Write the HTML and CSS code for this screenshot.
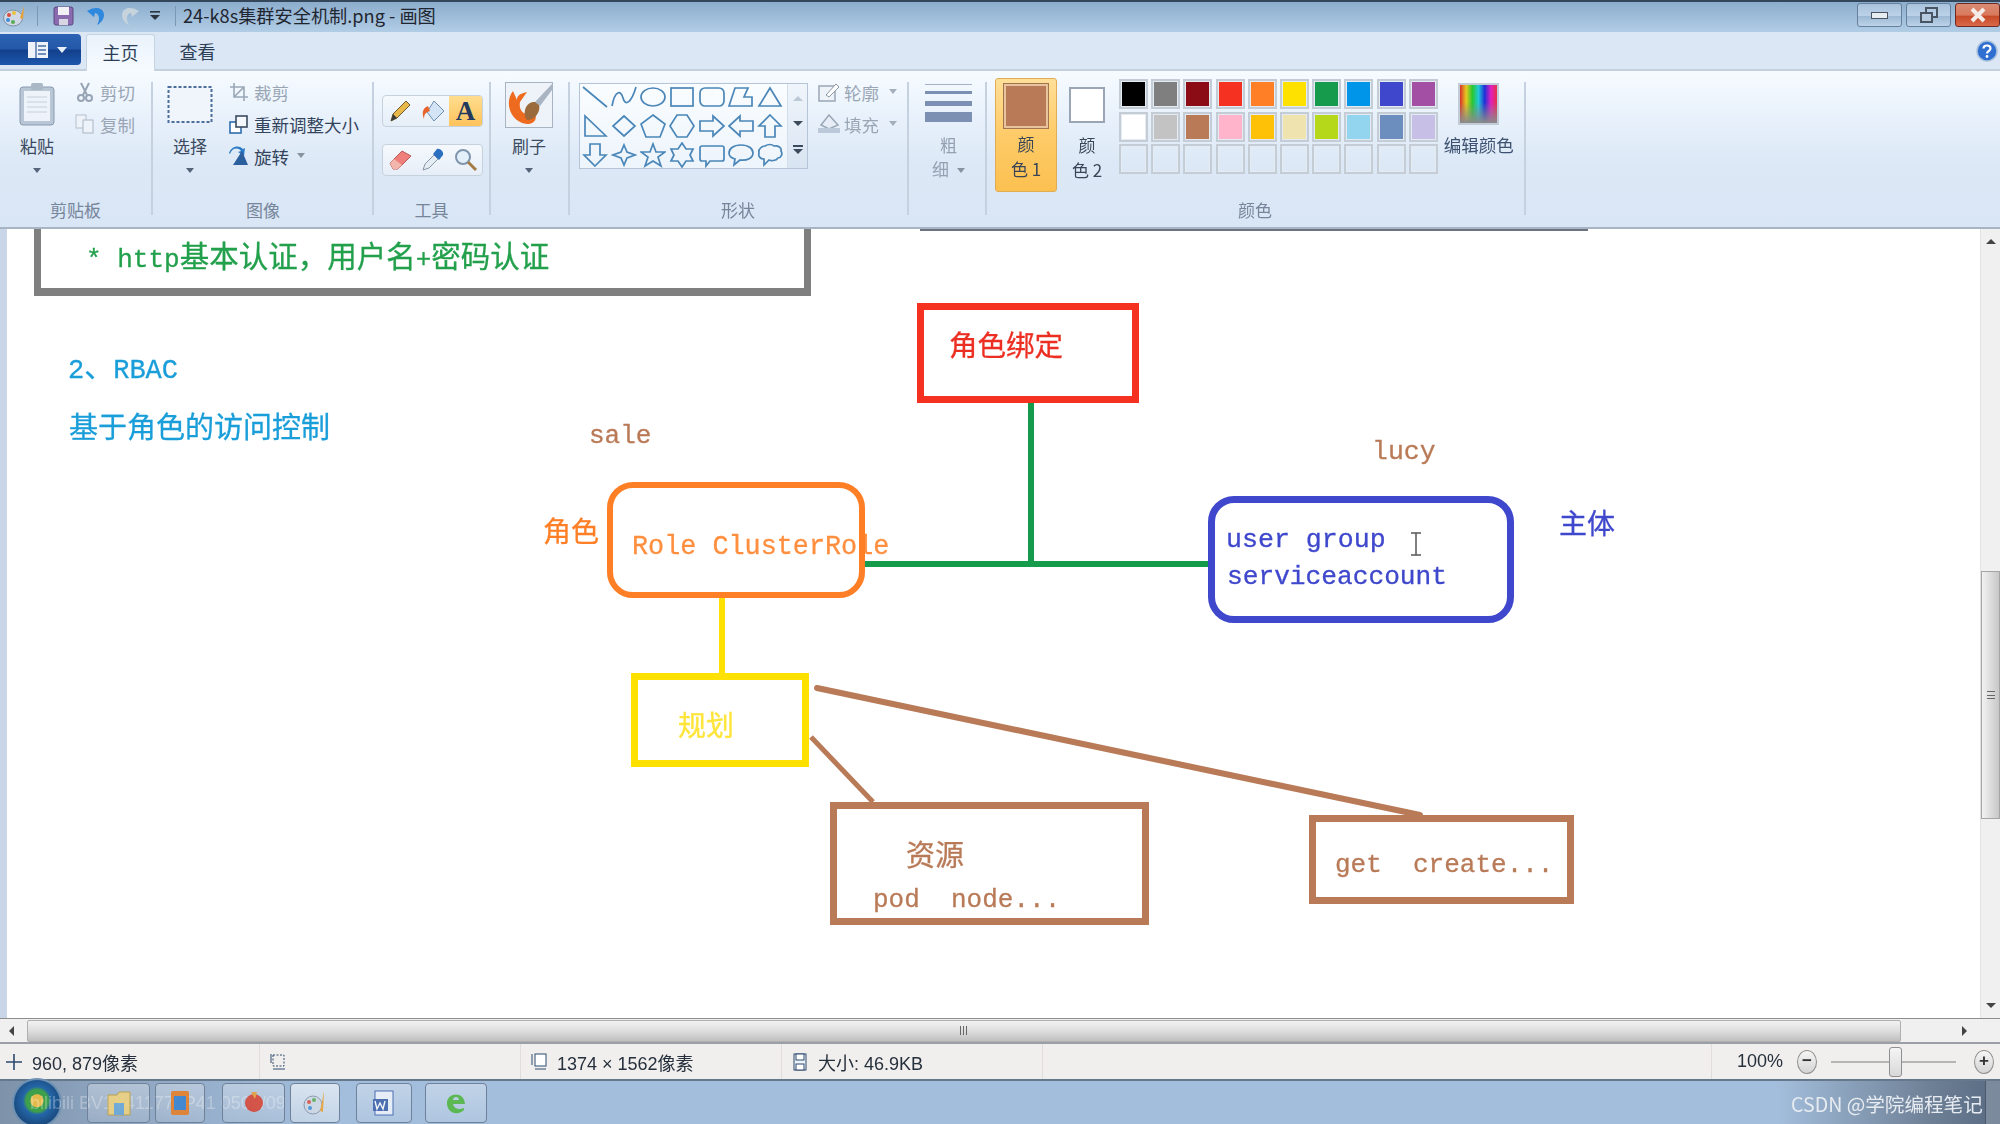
FILE: index.html
```html
<!DOCTYPE html>
<html lang="zh">
<head>
<meta charset="utf-8">
<title>24-k8s集群安全机制.png - 画图</title>
<link rel="stylesheet" href="styles.css">
</head>
<body>
<div class="app">
  <header class="titlebar">
    <svg class="qa qa-app" viewBox="0 0 24 22"><ellipse cx="10" cy="13" rx="9.5" ry="8" fill="#cfd8e4" stroke="#7f8fa3"/><circle cx="6" cy="10" r="2" fill="#d9503f"/><circle cx="11" cy="8" r="2" fill="#e8c33d"/><circle cx="5" cy="15" r="2" fill="#3d8ed9"/><circle cx="10" cy="17" r="2" fill="#58ad53"/><path d="M21 1 L17 13 L20 14 Z" fill="#e8a033"/></svg>
    <span class="qa-sep"></span>
    <svg class="qa qa-save" viewBox="0 0 21 20"><rect x="1" y="1" width="19" height="18" rx="2" fill="#8a6bb0" stroke="#5c4880"/><rect x="5" y="1" width="11" height="8" fill="#f2f2f6"/><rect x="6" y="13" width="9" height="6" fill="#d9d6e4"/></svg>
    <svg class="qa qa-undo" viewBox="0 0 21 20"><path d="M2 5 C8 0 18 1 18 9 C18 13 15 17 11 19 C14 14 14 8 9 7 L8 11 L1 5 L9 1 Z" fill="#2d88de"/></svg>
    <svg class="qa qa-redo" viewBox="0 0 21 20"><path d="M19 5 C13 0 3 1 3 9 C3 13 6 17 10 19 C7 14 7 8 12 7 L13 11 L20 5 L12 1 Z" fill="#c6d2dc"/></svg>
    <svg class="qa qa-more" viewBox="0 0 12 12"><rect x="1" y="1" width="10" height="1.6" fill="#2c3440"/><path d="M1 5 H11 L6 10 Z" fill="#2c3440"/></svg>
    <span class="qa-sep qa-sep2"></span>
    <span class="title-text">24-k8s集群安全机制.png - 画图</span>
    <div class="win-btns">
      <span class="win-btn"><span class="win-min"></span></span>
      <span class="win-btn"><svg class="win-ic" viewBox="0 0 18 16"><rect x="6" y="1" width="11" height="9" fill="none" stroke="#4a5563" stroke-width="2"/><rect x="1" y="6" width="11" height="9" fill="#b6cbe0" stroke="#4a5563" stroke-width="2"/></svg></span>
      <span class="win-btn win-close"><svg class="win-ic" viewBox="0 0 18 16"><path d="M3 2 L15 14 M15 2 L3 14" stroke="#f4ece8" stroke-width="4"/></svg></span>
    </div>
  </header>

  <nav class="tabs">
    <span class="file-btn"><svg class="file-ic" viewBox="0 0 22 18"><rect x="1" y="1" width="20" height="16" fill="#eef3fa"/><path d="M9 1 V17 M11 5 H19 M11 9 H19 M11 13 H19" stroke="#4a6ea5" stroke-width="1.4"/></svg><i class="arrow-w"></i></span>
    <span class="tab tab-on">主页</span>
    <span class="tab">查看</span>
    <svg class="help" viewBox="0 0 22 22"><circle cx="11" cy="11" r="10" fill="#2f6fd0" stroke="#a8c0dc" stroke-width="1.5"/><path d="M7.5 8.5 C7.5 4.5 14.5 4.5 14.5 8.5 C14.5 11 11 11 11 13.5" fill="none" stroke="#fff" stroke-width="2.2"/><circle cx="11" cy="16.5" r="1.4" fill="#fff"/></svg>
  </nav>

  <section class="ribbon">
    <div class="group g-clip">
      <div class="g-body">
        <div class="big big-paste">
          <svg class="big-ic ic-paste" viewBox="0 0 36 44"><rect x="1" y="5" width="34" height="38" rx="3" fill="#b9c6d6" stroke="#8a9bb0"/><rect x="5" y="9" width="26" height="30" fill="#eef3f9"/><path d="M8 15 H28 M8 20 H28 M8 25 H28 M8 30 H28" stroke="#c5cfdb"/><rect x="12" y="1" width="12" height="7" rx="2" fill="#aab7c7"/></svg>
          <span class="big-t">粘贴</span><i class="arrow"></i>
        </div>
        <div class="small-col col-clip">
          <div class="small off"><svg class="sm-ic" viewBox="0 0 20 20"><path d="M6 1 L12 13 M14 1 L8 13" stroke="#97a4b4" stroke-width="2"/><circle cx="6" cy="16" r="3" fill="none" stroke="#97a4b4" stroke-width="2"/><circle cx="14" cy="16" r="3" fill="none" stroke="#97a4b4" stroke-width="2"/></svg>剪切</div>
          <div class="small off"><svg class="sm-ic" viewBox="0 0 20 20"><rect x="1" y="1" width="10" height="13" fill="#eef3f9" stroke="#b5c0cd"/><rect x="8" y="6" width="10" height="13" fill="#eef3f9" stroke="#aab6c4"/></svg>复制</div>
        </div>
      </div>
      <div class="g-label">剪贴板</div>
    </div>
    <span class="sep"></span>
    <div class="group g-image">
      <div class="g-body">
        <div class="big big-sel">
          <svg class="big-ic ic-sel" viewBox="0 0 46 44"><rect x="1.5" y="5" width="43" height="35" fill="#f0f5fb" stroke="#4a6d9c" stroke-width="2" stroke-dasharray="3 2"/></svg>
          <span class="big-t">选择</span><i class="arrow"></i>
        </div>
        <div class="small-col col-img">
          <div class="small off"><svg class="sm-ic" viewBox="0 0 20 20"><path d="M5 1 V15 H19 M1 5 H15 V19 M5 15 L15 5" fill="none" stroke="#9aa7b6" stroke-width="1.6"/></svg>裁剪</div>
          <div class="small"><svg class="sm-ic" viewBox="0 0 20 20"><rect x="1" y="8" width="11" height="11" fill="#fff" stroke="#2f6db0" stroke-width="1.6"/><rect x="7" y="2" width="11" height="11" fill="#f4f8fc" stroke="#3a4a5f" stroke-width="1.6"/></svg>重新调整大小</div>
          <div class="small"><svg class="sm-ic" viewBox="0 0 20 20"><path d="M1 8 C3 2 9 1 12 5 L9 6 L15 10 L16 2 L14 3 C9 -2 2 1 0 7 Z" fill="#2a7cc7"/><path d="M4 19 L13 5 L19 19 Z" fill="#2c5f9e"/></svg>旋转<i class="arrow arrow-in"></i></div>
        </div>
      </div>
      <div class="g-label">图像</div>
    </div>
    <span class="sep"></span>
    <div class="group g-tools">
      <div class="g-body tool-body">
        <div class="tool-row">
          <span class="tool"><svg class="tool-ic" viewBox="0 0 24 24"><path d="M3 22 L5 15 L18 2 L22 6 L9 19 Z" fill="#e8b84a" stroke="#6d5a2c"/><path d="M3 22 L5 15 L9 19 Z" fill="#3a3a3a"/></svg></span>
          <span class="tool"><svg class="tool-ic" viewBox="0 0 24 24"><path d="M13 2 L23 12 L13 22 L6 13 Z" fill="#d2e4f6" stroke="#6f8fb2"/><path d="M7 7 C1 9 1 15 3 20 C3 15 5 13 9 12 Z" fill="#e8632a"/></svg></span>
          <span class="tool tool-on"><span class="tool-a">A</span></span>
        </div>
        <div class="tool-row">
          <span class="tool"><svg class="tool-ic" viewBox="0 0 24 24"><path d="M2 15 L14 3 L23 8 L10 21 L5 21 Z" fill="#ee7f7a" stroke="#b85a55"/><path d="M2 15 L6 11 L14 17 L10 21 L5 21 Z" fill="#f2b6ac"/></svg></span>
          <span class="tool"><svg class="tool-ic" viewBox="0 0 24 24"><path d="M2 22 L4 16 L13 7 L17 11 L8 20 Z" fill="#e4ecf4" stroke="#8a98a8"/><path d="M12 6 L16 1 C19 0 23 4 22 7 L18 12 Z" fill="#2a6fc0"/></svg></span>
          <span class="tool"><svg class="tool-ic" viewBox="0 0 24 24"><circle cx="9" cy="9" r="7" fill="#e3eff9" stroke="#7f95ad" stroke-width="2"/><path d="M14 14 L22 22" stroke="#a57b44" stroke-width="3"/></svg></span>
        </div>
      </div>
      <div class="g-label">工具</div>
    </div>
    <span class="sep"></span>
    <div class="group g-brush">
      <div class="g-body">
        <div class="big big-brush">
          <svg class="big-ic ic-brush" viewBox="0 0 48 46"><rect x="0.5" y="0.5" width="47" height="45" fill="#eef3f9" stroke="#a9b4c2"/><path d="M8 9 C-1 20 5 40 22 42 C30 42 33 36 29 30 C22 36 13 30 15 20 L22 10 C14 12 12 14 12 18 Z" fill="#ed6a1f"/><path d="M20 28 C22 20 30 18 34 22 C36 30 30 38 22 38 C20 36 19 32 20 28 Z" fill="#9a6a3c"/><path d="M30 20 L47 2 V8 L35 24 Z" fill="#a9b4c2"/></svg>
          <span class="big-t">刷子</span><i class="arrow"></i>
        </div>
      </div>
      <div class="g-label lb-none"></div>
    </div>
    <span class="sep"></span>
    <div class="group g-shapes">
      <div class="g-body">
        <div class="gallery">
          <div class="shape-grid">
            <svg class="shp" viewBox="0 0 26 26"><path d="M1 3 L25 23"/></svg>
            <svg class="shp" viewBox="0 0 26 26"><path d="M1 22 C4 6 10 6 12 14 C14 22 20 20 25 3"/></svg>
            <svg class="shp" viewBox="0 0 26 26"><ellipse cx="13" cy="13" rx="12" ry="9"/></svg>
            <svg class="shp" viewBox="0 0 26 26"><rect x="2" y="4" width="22" height="18"/></svg>
            <svg class="shp" viewBox="0 0 26 26"><rect x="1" y="4" width="24" height="18" rx="5"/></svg>
            <svg class="shp" viewBox="0 0 26 26"><path d="M1 22 L7 4 H20 L16 13 H24 V22 Z"/></svg>
            <svg class="shp" viewBox="0 0 26 26"><path d="M13 4 L24 22 H2 Z"/></svg>
            <svg class="shp" viewBox="0 0 26 26"><path d="M3 3 V23 H24 Z"/></svg>
            <svg class="shp" viewBox="0 0 26 26"><path d="M13 3 L24 13 L13 23 L2 13 Z"/></svg>
            <svg class="shp" viewBox="0 0 26 26"><path d="M13 2 L25 11 L20 24 H6 L1 11 Z"/></svg>
            <svg class="shp" viewBox="0 0 26 26"><path d="M8 2 H18 L25 13 L18 24 H8 L1 13 Z"/></svg>
            <svg class="shp" viewBox="0 0 26 26"><path d="M1 8 H14 V3 L25 13 L14 23 V18 H1 Z"/></svg>
            <svg class="shp" viewBox="0 0 26 26"><path d="M25 8 H12 V3 L1 13 L12 23 V18 H25 Z"/></svg>
            <svg class="shp" viewBox="0 0 26 26"><path d="M13 2 L24 13 H18 V24 H8 V13 H2 Z"/></svg>
            <svg class="shp" viewBox="0 0 26 26"><path d="M13 24 L24 13 H18 V2 H8 V13 H2 Z"/></svg>
            <svg class="shp" viewBox="0 0 26 26"><path d="M13 3 L16 10 L24 13 L16 16 L13 23 L10 16 L2 13 L10 10 Z"/></svg>
            <svg class="shp" viewBox="0 0 26 26"><path d="M13 2 L16 10 H25 L18 15 L21 24 L13 19 L5 24 L8 15 L1 10 H10 Z"/></svg>
            <svg class="shp" viewBox="0 0 26 26"><path d="M13 1 L17 7 H24 L21 13 L24 19 H17 L13 25 L9 19 H2 L5 13 L2 7 H9 Z"/></svg>
            <svg class="shp" viewBox="0 0 26 26"><path d="M3 4 H23 Q25 4 25 6 V17 Q25 19 23 19 H11 L7 24 V19 H3 Q1 19 1 17 V6 Q1 4 3 4 Z"/></svg>
            <svg class="shp" viewBox="0 0 26 26"><path d="M13 3 C21 3 25 7 25 11 C25 16 19 19 12 18 L6 23 L7 17 C3 16 1 14 1 11 C1 7 5 3 13 3 Z"/></svg>
            <svg class="shp" viewBox="0 0 26 26"><path d="M8 4 C11 2 15 2 17 4 C21 3 25 6 24 9 C26 12 24 16 21 16 C19 19 14 19 12 18 L7 23 L7 17 C3 17 1 14 2 11 C1 7 5 4 8 4 Z"/></svg>
          </div>
          <div class="gal-scroll">
            <i class="gal-up"></i><i class="gal-down"></i><i class="gal-more"></i>
          </div>
        </div>
        <div class="small-col col-shp">
          <div class="small off"><svg class="sm-ic sm-wide" viewBox="0 0 22 20"><rect x="1" y="4" width="16" height="15" fill="#eef3f9" stroke="#9aa7b6" stroke-width="1.5"/><path d="M8 13 L18 2 L21 5 L11 15 Z" fill="#fff" stroke="#8b97a6"/></svg>轮廓<i class="arrow arrow-in2"></i></div>
          <div class="small off"><svg class="sm-ic sm-wide" viewBox="0 0 22 20"><path d="M11 1 L20 11 L11 15 L3 11 Z" fill="#e6edf6" stroke="#9aa7b6" stroke-width="1.5"/><rect x="0" y="14" width="22" height="5" fill="#bcc9da"/></svg>填充<i class="arrow arrow-in2"></i></div>
        </div>
      </div>
      <div class="g-label lb-shape">形状</div>
    </div>
    <span class="sep"></span>
    <div class="group g-size">
      <div class="g-body size-body">
        <div class="lines"><i class="ln l1"></i><i class="ln l2"></i><i class="ln l3"></i><i class="ln l4"></i></div>
        <span class="size-t off">粗</span>
        <span class="size-t off">细<i class="arrow arrow-in"></i></span>
      </div>
      <div class="g-label lb-none"></div>
    </div>
    <span class="sep"></span>
    <div class="group g-colors">
      <div class="g-body">
        <div class="color-btn color-on"><span class="color-box c1-box"><i class="c1-fill"></i></span><span class="color-t">颜</span><span class="color-t">色 1</span></div>
        <div class="color-btn color2"><span class="color-box c2-box"></span><span class="color-t">颜</span><span class="color-t">色 2</span></div>
        <div class="swatches">
          <i class="sw s-black"></i><i class="sw s-gray"></i><i class="sw s-maroon"></i><i class="sw s-red"></i><i class="sw s-orange"></i><i class="sw s-yellow"></i><i class="sw s-green"></i><i class="sw s-cyan"></i><i class="sw s-indigo"></i><i class="sw s-purple"></i>
          <i class="sw s-white"></i><i class="sw s-silver"></i><i class="sw s-brown"></i><i class="sw s-pink"></i><i class="sw s-gold"></i><i class="sw s-cream"></i><i class="sw s-lime"></i><i class="sw s-sky"></i><i class="sw s-steel"></i><i class="sw s-lav"></i>
          <i class="sw"></i><i class="sw"></i><i class="sw"></i><i class="sw"></i><i class="sw"></i><i class="sw"></i><i class="sw"></i><i class="sw"></i><i class="sw"></i><i class="sw"></i>
        </div>
        <div class="edit-color"><span class="rainbow"></span><span class="edit-t">编辑颜色</span></div>
      </div>
      <div class="g-label lb-color">颜色</div>
    </div>
    <span class="sep"></span>
  </section>

  <main class="work">
    <div class="canvas">
      <i class="top-rule"></i>
      <div class="gbox"></div>
      <div class="t t-http"><span class="lat">* http</span>基本认证，用户名<span class="lat">+</span>密码认证</div>
      <div class="t t-rbac"><span class="lat">2</span>、<span class="lat">RBAC</span></div>
      <div class="t t-ctrl">基于角色的访问控制</div>
      <div class="t t-bind">角色绑定</div>
      <div class="t t-sale">sale</div>
      <div class="t t-lucy">lucy</div>
      <div class="t t-role">角色</div>
      <div class="t t-rc">Role ClusterRole</div>
      <div class="t t-user">user group</div>
      <div class="t t-sa">serviceaccount</div>
      <div class="t t-subj">主体</div>
      <div class="t t-plan">规划</div>
      <div class="t t-res">资源</div>
      <div class="t t-pod">pod&nbsp;&nbsp;node...</div>
      <div class="t t-get">get&nbsp;&nbsp;create...</div>
      <svg class="wires" viewBox="0 0 1980 789">
        <path class="w-green" d="M1031 174 V338 M864 335 H1209"/>
        <path class="w-yellow" d="M722 369 V445"/>
        <path class="w-brown" d="M817 459 L1420 586"/>
        <path class="w-brown2" d="M811 508 L873 573"/>
      </svg>
      <div class="box b-red"></div>
      <div class="box b-orange"></div>
      <div class="box b-blue"></div>
      <div class="box b-yellow"></div>
      <div class="box b-res"></div>
      <div class="box b-get"></div>
      <svg class="ibeam" viewBox="0 0 12 24"><path d="M1 1 H11 M6 1 V23 M1 23 H11" fill="none" stroke="#555" stroke-width="1.5"/></svg>
    </div>
    <aside class="vscroll">
      <i class="tri-up"></i>
      <div class="v-track"><div class="v-thumb"><span class="v-grip"></span></div></div>
      <i class="tri-down"></i>
    </aside>
  </main>

  <div class="hscroll">
    <i class="tri-left"></i>
    <div class="h-thumb"><span class="h-grip"></span></div>
    <i class="tri-right"></i>
  </div>

  <footer class="status">
    <div class="st st1"><svg class="st-ic" viewBox="0 0 16 16"><path d="M8 0 V16 M0 8 H16" stroke="#2d4a6f" stroke-width="1.6"/></svg>960, 879像素</div>
    <div class="st st2"><svg class="st-ic" viewBox="0 0 16 18"><rect x="3" y="2" width="11" height="11" fill="none" stroke="#2d4a6f" stroke-dasharray="2 1.5"/><path d="M3 16 H15 M1 1 V10" stroke="#2d4a6f"/></svg></div>
    <div class="st st3"><svg class="st-ic" viewBox="0 0 16 18"><rect x="4" y="1" width="11" height="12" fill="#fff" stroke="#2d4a6f"/><path d="M4 16 H15 M1 1 V12" stroke="#2d4a6f"/></svg>1374 × 1562像素</div>
    <div class="st st4"><svg class="st-ic" viewBox="0 0 16 18"><rect x="2" y="1" width="12" height="16" fill="#eef3f9" stroke="#2d4a6f"/><rect x="4" y="1" width="8" height="6" fill="#fff" stroke="#2d4a6f"/><rect x="4" y="11" width="8" height="6" fill="#fff" stroke="#2d4a6f"/></svg>大小: 46.9KB</div>
    <div class="st st5"></div>
    <div class="zoom">
      <span class="z-text">100%</span>
      <span class="z-btn">−</span>
      <span class="z-track"><i class="z-thumb"></i></span>
      <span class="z-btn">+</span>
    </div>
  </footer>

  <footer class="taskbar">
    <span class="orb"></span>
    <span class="wm">bilibili BV1Y411770P41 0509/09</span>
    <span class="tb tb1"><svg class="tb-ic" viewBox="0 0 24 28"><path d="M1 6 H10 L12 3 H23 V26 H1 Z" fill="#f0d27a" stroke="#b99a3f"/><rect x="7" y="14" width="10" height="12" fill="#68a8d8"/></svg></span>
    <span class="tb tb2"><svg class="tb-ic" viewBox="0 0 24 28"><rect x="3" y="2" width="18" height="24" rx="2" fill="#e87a20"/><rect x="6" y="7" width="12" height="14" fill="#2f7fd0"/></svg></span>
    <span class="tb tb3"><svg class="tb-ic" viewBox="0 0 24 28"><circle cx="12" cy="14" r="9" fill="#d8402f"/><path d="M9 3 L15 3 L13 10 Z" fill="#e8a033"/></svg></span>
    <span class="tb tb4"><svg class="tb-ic" viewBox="0 0 24 28"><ellipse cx="10" cy="16" rx="9" ry="9" fill="#cfd8e4" stroke="#7f8fa3"/><circle cx="6" cy="13" r="2" fill="#d9503f"/><circle cx="11" cy="11" r="2" fill="#58ad53"/><circle cx="7" cy="19" r="2" fill="#3d8ed9"/><path d="M21 2 L17 22 L20 23 Z" fill="#e8a033"/></svg></span>
    <span class="tb tb5"><svg class="tb-ic" viewBox="0 0 24 28"><rect x="3" y="2" width="18" height="24" fill="#eef3fa" stroke="#3a5fa8"/><rect x="1" y="10" width="15" height="12" fill="#3a5fa8"/><path d="M3 12 L5 20 L8 14 L11 20 L13 12" fill="none" stroke="#fff" stroke-width="1.4"/></svg></span>
    <span class="tb tb6"><svg class="tb-ic" viewBox="0 0 24 28"><path d="M20 21 C16 26 4 26 3 15 C2 4 20 1 21 15 H9 C10 20 15 21 20 19 Z M9 11 H15 C15 7 9 7 9 11 Z" fill="#4cb53a" fill-rule="evenodd"/></svg></span>
    <span class="tb-fill"></span>
    <span class="csdn">CSDN @学院编程笔记</span>
    <span class="show-desk"></span>
  </footer>
</div>
</body>
</html>
```
FILE: styles.css
```css
* { box-sizing: border-box; }
html, body { margin: 0; padding: 0; }
body {
  width: 2000px;
  height: 1124px;
  overflow: hidden;
  background: #fff;
  font-family: "Noto Sans CJK SC", "Liberation Sans", sans-serif;
  color: #3b4a60;
}
.app { display: flex; flex-direction: column; height: 1124px; filter: blur(0.45px); }
i { display: block; font-style: normal; }

/* title bar */
.titlebar {
  height: 32px; flex: none; display: flex; align-items: center; padding-bottom: 3px;
  border-top: 2px solid #34465a;
  background: linear-gradient(#8cadcd, #b1cde6);
}
.qa { display: block; flex: none; }
.qa-app { width: 24px; height: 22px; margin-left: 3px; }
.qa-sep { width: 1px; height: 20px; background: #7d98b3; margin-left: 10px; flex: none; }
.qa-save { width: 21px; height: 20px; margin-left: 15px; }
.qa-undo { width: 21px; height: 20px; margin-left: 12px; }
.qa-redo { width: 21px; height: 20px; margin-left: 12px; }
.qa-more { width: 12px; height: 12px; margin-left: 9px; }
.qa-sep2 { margin-left: 14px; }
.title-text { margin-left: 7px; font-size: 18.2px; color: #1f2630; line-height: 27px; white-space: nowrap; }
.win-btns { margin-left: auto; display: flex; gap: 4px; align-self: flex-start; margin-top: 1px; }
.win-btn {
  width: 45px; height: 24px; display: flex; align-items: center; justify-content: center;
  border: 1px solid #66809c; border-radius: 3px;
  background: linear-gradient(#a9c3dc 0, #bcd2e8 55%, #9db9d5 56%, #bcd3e8 100%);
}
.win-min { width: 17px; height: 7px; background: #e8edf2; border: 1px solid #4a5563; }
.win-ic { width: 18px; height: 16px; display: block; }
.win-close {
  border-color: #6e2a22;
  background: linear-gradient(#d98c74 0, #d9795d 50%, #c74a28 56%, #d9694a 100%);
}

/* tabs */
.tabs {
  height: 39px; flex: none; display: flex; align-items: flex-start;
  background: #dbe7f4; border-bottom: 2px solid #c3d0dd;
}
.file-btn {
  width: 81px; height: 31px; margin-top: 2px; display: flex; align-items: center; justify-content: center; gap: 8px;
  background: linear-gradient(#2c63b4, #2458a8 48%, #12408b 52%, #1d57ad);
  border-radius: 0 4px 4px 0; padding-left: 12px;
}
.file-ic { width: 22px; height: 18px; display: block; }
.arrow-w { width: 0; height: 0; border: 5px solid transparent; border-top: 6px solid #e8f0fa; border-bottom: 0; }
.tab {
  width: 69px; height: 37px; margin-top: 2px; text-align: center; font-size: 18px; line-height: 34px; color: #2d3f57;
}
.tab-on {
  margin-left: 5px; background: linear-gradient(#eaf2fb, #f6fbff);
  border: 1px solid #c6d3e0; border-bottom: 0; border-radius: 3px 3px 0 0;
}
.tab-on + .tab { margin-left: 8px; }
.help { width: 22px; height: 22px; margin-left: auto; margin-top: 8px; margin-right: 2px; display: block; }

/* ribbon */
.ribbon {
  height: 158px; flex: none; display: flex; align-items: flex-start;
  background: linear-gradient(#f6fbff 0, #e8f1fb 30%, #dce8f6 60%, #d9e6f5 100%);
  border-bottom: 2px solid #a6b4c4;
}
.sep { flex: none; width: 2px; height: 133px; margin-top: 11px; background: #c5d1df; }
.group { flex: none; display: flex; flex-direction: column; height: 156px; }
.g-body { height: 127px; display: flex; padding-top: 6px; }
.g-label { height: 24px; line-height: 24px; font-size: 17px; text-align: center; color: #76859a; }
.g-clip { width: 151px; }
.g-image { width: 219px; }
.g-tools { width: 115px; }
.g-brush { width: 77px; }
.g-shapes { width: 337px; }
.g-size { width: 76px; }
.g-colors { width: 537px; }
.g-clip .g-label { text-align: left; padding-left: 50px; }
.g-image .g-label { text-align: left; padding-left: 93px; }

.big { display: flex; flex-direction: column; align-items: center; flex: none; padding-top: 5px; }
.big-ic { display: block; flex: none; }
.big-t { font-size: 17px; line-height: 24px; margin-top: 8px; white-space: nowrap; color: #3b4a60; }
.arrow { width: 0; height: 0; border: 4px solid transparent; border-top: 5px solid #56647a; border-bottom: 0; margin-top: 10px; }
.arrow-in { display: inline-block; margin: 0 0 2px 8px; vertical-align: middle; border-top-color: #87939f; }
.arrow-in2 { display: inline-block; margin: 0 0 2px 10px; vertical-align: middle; border-top-color: #a4afbc; }
.big-paste { width: 44px; margin-left: 15px; }
.ic-paste { width: 36px; height: 44px; }
.big-sel { width: 46px; margin-left: 14px; }
.ic-sel { width: 46px; height: 44px; }
.big-brush { width: 48px; margin-left: 14px; }
.ic-brush { width: 48px; height: 46px; }
.big-brush .big-t { margin-top: 6px; }

.small-col { display: flex; flex-direction: column; flex: none; margin-top: -1px; }
.col-clip { margin-left: 16px; }
.col-img { margin-left: 16px; }
.col-shp { margin-left: 10px; }
.small { height: 32px; display: flex; align-items: center; font-size: 17.5px; color: #33445c; white-space: nowrap; }
.small.off { color: #9aa6b5; }
.sm-ic { width: 20px; height: 20px; margin-right: 5px; display: block; flex: none; }
.sm-wide { width: 22px; margin-right: 4px; }

.tool-body { flex-direction: column; padding: 24px 0 0 8px; gap: 17px; }
.tool-row {
  width: 101px; height: 32px; display: grid; grid-template-columns: 33px 33px 1fr;
  border: 1px solid #c6d1de; border-radius: 4px; background: linear-gradient(#f5f9fd, #e6eef8);
}
.tool { display: flex; align-items: center; justify-content: center; }
.tool-ic { width: 24px; height: 24px; display: block; }
.tool-on { background: linear-gradient(#ffdd8e, #fdc35c); border-radius: 0 3px 3px 0; }
.tool-a { font-family: "Liberation Serif", serif; font-weight: 700; font-size: 27px; line-height: 30px; color: #24395e; }

.gallery {
  width: 229px; height: 86px; display: flex; margin: 6px 0 0 9px; flex: none;
  border: 1px solid #b5c4d6; background: linear-gradient(#fafdff, #edf4fb);
}
.shape-grid { width: 207px; display: grid; grid-template-columns: repeat(7, 1fr); grid-auto-rows: 29px; padding: 0 2px 0 0; }
.shp { width: 26px; height: 26px; margin: 0 auto; display: block; fill: none; stroke: #4a86b8; stroke-width: 1.7; }
.gal-scroll { flex: 1; background: linear-gradient(#f0f5fb, #d9e4f2); border-left: 1px solid #d3deea; display: flex; flex-direction: column; align-items: center; }
.gal-up { width: 0; height: 0; margin-top: 12px; border: 5px solid transparent; border-bottom: 5px solid #bcc8d6; border-top: 0; }
.gal-down { width: 0; height: 0; margin-top: 20px; border: 5px solid transparent; border-top: 5px solid #3d4a5c; border-bottom: 0; }
.gal-more { width: 10px; height: 9px; margin-top: 19px; border-top: 2px solid #3d4a5c; }
.gal-more::after { content: ""; display: block; width: 0; height: 0; margin-top: 2px; border: 5px solid transparent; border-top: 5px solid #3d4a5c; border-bottom: 0; }

.size-body { flex-direction: column; padding: 12px 0 0 16px; }
.lines { width: 47px; height: 40px; display: flex; flex-direction: column; flex: none; }
.ln { background: #7b90b2; width: 100%; flex: none; }
.l1 { height: 1px; margin-top: 1px; background: #a3b2c6; }
.l2 { height: 3px; margin-top: 6px; }
.l3 { height: 5px; margin-top: 7px; }
.l4 { height: 10px; margin-top: 6px; }
.size-t { display: block; width: 47px; text-align: center; font-size: 17px; line-height: 24px; margin-top: 0; white-space: nowrap; }
.size-t.off { color: #94a1b1; }
.lines + .size-t { margin-top: 10px; }

.color-btn { display: flex; flex-direction: column; align-items: center; flex: none; }
.color-on {
  width: 62px; height: 114px; margin: 1px 0 0 8px; padding-top: 4px;
  background: linear-gradient(#ffdf98, #fecb68 50%, #fbc050); border: 1px solid #e0ad55; border-radius: 3px;
}
.color-box { display: block; flex: none; }
.c1-box { width: 46px; height: 46px; border: 1px solid #a2754f; padding: 2px; background: #e7c49d; }
.c1-fill { width: 100%; height: 100%; background: #b97a57; }
.color-t { font-size: 17px; line-height: 25px; white-space: nowrap; color: #3a4658; }
.color-on .color-box + .color-t { margin-top: 2px; }
.color2 { width: 36px; margin: 10px 0 0 12px; }
.c2-box { width: 36px; height: 36px; background: #fff; border: 2px solid #9aa6b5; }
.color2 .color-t:nth-child(2) { margin-top: 9px; }
.swatches {
  margin: 2px 0 0 14px; flex: none; display: grid;
  grid-template-columns: repeat(10, 29px); grid-auto-rows: 30px; column-gap: 3.2px; row-gap: 2.5px;
}
.sw { border: 2px solid #c4ccd6; outline: 1px solid #e4ebf3; outline-offset: -3px; }
.s-black { background: #000; } .s-gray { background: #7f7f7f; } .s-maroon { background: #8c0c16; }
.s-red { background: #f53222; } .s-orange { background: #ff7f27; } .s-yellow { background: #ffe100; }
.s-green { background: #169b4c; } .s-cyan { background: #0095e8; } .s-indigo { background: #3f48cc; } .s-purple { background: #a34fa3; }
.s-white { background: #fff; } .s-silver { background: #c3c3c3; } .s-brown { background: #b97a57; }
.s-pink { background: #ffb4cb; } .s-gold { background: #ffc107; } .s-cream { background: #efe4b0; }
.s-lime { background: #b5d81b; } .s-sky { background: #93d4ee; } .s-steel { background: #6c8ebe; } .s-lav { background: #c8bfe7; }
.edit-color { display: flex; flex-direction: column; align-items: center; width: 70px; margin: 6px 0 0 6px; flex: none; }
.rainbow {
  width: 41px; height: 42px; display: block; border: 2px solid #c2ccd8;
  background: linear-gradient(transparent 45%, #8a8a8a 100%), linear-gradient(90deg, #d9302a, #e8c820, #28c830, #20c8d8, #2030d8, #e020c0, #e8304a);
}
.edit-t { font-size: 17.5px; line-height: 24px; margin-top: 8px; color: #3d5170; white-space: nowrap; }
.g-shapes .g-label { text-align: left; padding-left: 151px; }
.g-colors .g-label { text-align: left; padding-left: 251px; }

/* work area */
.work { flex: 1; display: flex; min-height: 0; }
.canvas {
  flex: 1; position: relative; overflow: hidden;
  background: linear-gradient(90deg, #c9d6e8 7px, #fff 7px);
  font-size: 28px;
}
.top-rule { position: absolute; left: 920px; top: 0; width: 668px; height: 2px; background: #6d7480; }
.gbox { position: absolute; left: 34px; top: -10px; width: 777px; height: 77px; border: solid #7f7f7f; border-width: 0 7px 8px; }
.t { position: absolute; white-space: nowrap; line-height: 1.2; font-family: "Liberation Mono", "Noto Sans CJK SC", monospace; -webkit-text-stroke: 0.3px; }
.lat { font-size: 26px; }
.t-http { left: 86px; top: 13px; font-size: 29.5px; color: #22a04c; }
.t-rbac { left: 68px; top: 125px; font-size: 29px; color: #1a9ed9; }
.t-rbac .lat { font-size: 27px; }
.t-ctrl { left: 69px; top: 185px; font-size: 29px; color: #1a9ed9; }
.t-bind { left: 949px; top: 103px; font-size: 28.5px; color: #ec2f22; }
.t-sale { left: 589px; top: 192px; font-size: 26px; color: #b97a57; }
.t-lucy { left: 1372px; top: 208px; font-size: 26.5px; color: #b97a57; }
.t-role { left: 543px; top: 289px; font-size: 28px; color: #ff7f27; }
.t-rc { left: 632px; top: 302px; font-size: 26.8px; color: #ff8f3f; }
.t-user { left: 1226px; top: 296px; font-size: 26.6px; color: #3f48cc; }
.t-sa { left: 1227px; top: 333px; font-size: 26.2px; color: #3f48cc; }
.t-subj { left: 1559px; top: 281px; font-size: 28px; color: #3f48cc; }
.t-plan { left: 678px; top: 483px; font-size: 28px; color: #ffe53a; }
.t-res { left: 906px; top: 613px; font-size: 29px; color: #b97a57; }
.t-pod { left: 873px; top: 656px; font-size: 26px; color: #b97a57; }
.t-get { left: 1335px; top: 621px; font-size: 26px; color: #b97a57; }
.wires { position: absolute; left: 0; top: 0; width: 1980px; height: 789px; fill: none; }
.w-green { stroke: #169b4c; stroke-width: 6; }
.w-yellow { stroke: #ffe100; stroke-width: 6; }
.w-brown { stroke: #b97a57; stroke-width: 6; stroke-linecap: round; }
.w-brown2 { stroke: #b97a57; stroke-width: 5; }
.box { position: absolute; border-style: solid; }
.b-red { left: 917px; top: 74px; width: 222px; height: 100px; border-width: 7px; border-color: #f53222; }
.b-orange { left: 607px; top: 253px; width: 258px; height: 116px; border-width: 6px; border-color: #ff7f27; border-radius: 26px; }
.b-blue { left: 1208px; top: 267px; width: 306px; height: 127px; border-width: 7px; border-color: #3f48cc; border-radius: 26px; }
.b-yellow { left: 631px; top: 444px; width: 178px; height: 94px; border-width: 7px; border-color: #ffe100; }
.b-res { left: 830px; top: 573px; width: 319px; height: 123px; border-width: 7px; border-color: #b97a57; }
.b-get { left: 1309px; top: 586px; width: 265px; height: 89px; border-width: 7px; border-color: #b97a57; }
.ibeam { position: absolute; left: 1410px; top: 303px; width: 12px; height: 24px; }

.vscroll { width: 20px; flex: none; background: #f0f0f0; display: flex; flex-direction: column; align-items: center; border-left: 1px solid #e3e3e3; }
.tri-up { width: 0; height: 0; margin-top: 10px; border: 5px solid transparent; border-top: 0; border-bottom: 5px solid #444; }
.tri-down { width: 0; height: 0; margin-bottom: 10px; border: 5px solid transparent; border-bottom: 0; border-top: 5px solid #444; }
.v-track { flex: 1; width: 100%; padding-top: 327px; }
.v-thumb {
  width: 100%; height: 248px; display: flex; align-items: center; justify-content: center;
  background: linear-gradient(90deg, #f2f2f2, #c7c7c7); border: 1px solid #a5a5a5;
}
.v-grip { width: 8px; height: 8px; border-top: 1px solid #666; border-bottom: 1px solid #666; background: linear-gradient(#666, #666) center / 100% 1px no-repeat; }

.hscroll {
  height: 26px; flex: none; display: flex; align-items: center;
  background: #f0f0f0; border-top: 1px solid #8d8d8d; border-bottom: 2px solid #9aa0a6;
}
.tri-left { width: 0; height: 0; margin-left: 9px; border: 5px solid transparent; border-left: 0; border-right: 5px solid #444; }
.h-thumb {
  width: 1874px; height: 22px; margin-left: 13px; display: flex; align-items: center; justify-content: center;
  background: linear-gradient(#f2f2f2, #e0e0e0 45%, #bfbfbf); border: 1px solid #b0b0b0; border-radius: 2px;
}
.h-grip { width: 9px; height: 9px; background: repeating-linear-gradient(90deg, #666 0 1px, transparent 1px 3px); }
.tri-right { width: 0; height: 0; margin-left: 61px; border: 5px solid transparent; border-right: 0; border-left: 5px solid #444; }

/* status */
.status {
  height: 35px; flex: none; display: flex; background: #f1efee;
  font-family: "Liberation Sans", "Noto Sans CJK SC", sans-serif; font-size: 18px; color: #26303c;
}
.st { display: flex; align-items: center; height: 100%; border-right: 1px solid #e0ddda; flex: none; white-space: nowrap; }
.st-ic { width: 16px; height: 18px; margin-right: 10px; display: block; flex: none; }
.st1 { width: 260px; padding-left: 6px; }
.st2 { width: 261px; padding-left: 10px; }
.st3 { width: 261px; padding-left: 10px; }
.st4 { width: 261px; padding-left: 10px; }
.st5 { width: 669px; }
.zoom { flex: 1; display: flex; align-items: center; padding-left: 25px; }
.z-text { width: 48px; }
.z-btn {
  width: 20px; height: 24px; margin-left: 12px; border: 1px solid #8f8f8f; border-radius: 50%;
  background: linear-gradient(#f5f5f5, #d4d4d4); text-align: center; line-height: 20px; font-size: 17px; font-weight: 700; color: #333;
}
.z-track { width: 125px; height: 2px; background: #b5b5b5; margin-left: 14px; display: flex; align-items: center; padding-left: 58px; margin-right: 6px; }
.z-thumb { width: 13px; height: 30px; background: linear-gradient(#f5f5f5, #d8d8d8); border: 1px solid #8f8f8f; border-radius: 3px; }

/* taskbar */
.taskbar {
  height: 45px; flex: none; display: flex; align-items: center; position: relative;
  background: #a3bedc; border-top: 2px solid #66788c;
  background-image: linear-gradient(90deg, #7e92a9 0, #8ba2bd 90px, #a3bedc 340px);
}
.orb {
  width: 50px; height: 50px; margin: 0 0 0 12px; flex: none; border-radius: 50%;
  background: radial-gradient(circle at 50% 45%, #e5b94a 0 6px, #3ea04a 7px 11px, #2466a8 14px, #1a4b80 24px);
  border: 2px solid #6d90b3;
}
.wm { position: absolute; left: 30px; top: 12px; font-size: 18px; color: rgba(255,255,255,.3); white-space: nowrap; font-family: "Liberation Sans", sans-serif; }
.tb {
  height: 40px; flex: none; display: flex; align-items: center; justify-content: center; position: relative;
  background: linear-gradient(rgba(255,255,255,.32), rgba(255,255,255,.12)); border: 1px solid #6f8299; border-radius: 4px;
}
.tb-ic { width: 24px; height: 28px; display: block; opacity: .85; }
.tb1 { width: 63px; margin-left: 25px; }
.tb2 { width: 50px; margin-left: 5px; }
.tb3 { width: 63px; margin-left: 17px; }
.tb4 { width: 50px; margin-left: 5px; background: linear-gradient(rgba(255,255,255,.6), rgba(255,255,255,.35)); }
.tb5 { width: 56px; margin-left: 16px; }
.tb6 { width: 62px; margin-left: 13px; }
.tb-fill { flex: 1; align-self: stretch; background: linear-gradient(90deg, #a3bedc 0, #a3bedc 1290px, #6f8197 1440px, #5d6f86 100%); }
.csdn { position: absolute; left: 1791px; top: 11px; font-size: 19.6px; line-height: 24px; color: #e6ebf1; white-space: nowrap; }
.show-desk { width: 15px; align-self: stretch; flex: none; background: #7b8a9c; border-left: 1px solid #4d5a6b; }
```
